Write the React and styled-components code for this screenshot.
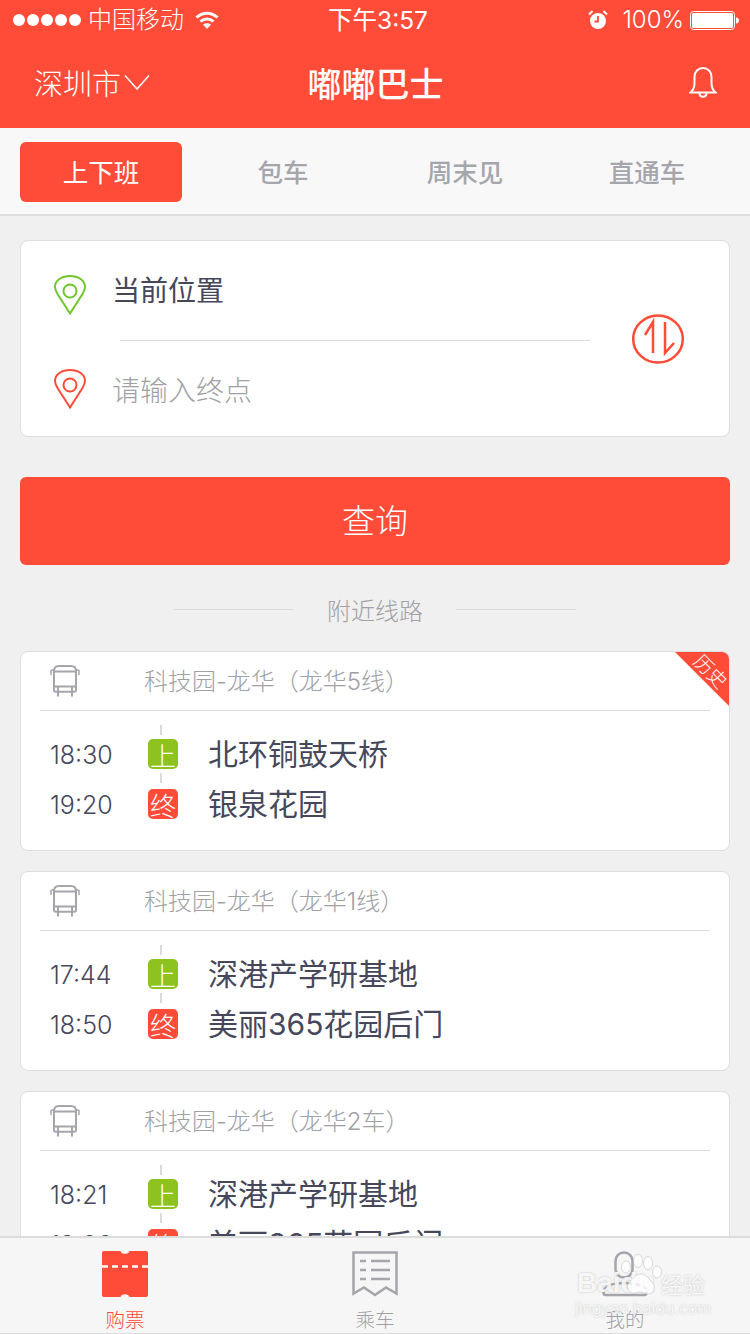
import React from 'react'
import styled, { createGlobalStyle } from 'styled-components'

const RED = '#ff4c39'
const FONT = 'Inter, "Noto Sans CJK SC", sans-serif'

const GlobalStyle = createGlobalStyle`
  html, body {
    margin: 0;
    padding: 0;
    background: #f0f0f0;
    font-family: ${FONT};
  }
  * { box-sizing: border-box; }
`

const Page = styled.div`
  position: relative;
  width: 750px;
  height: 1334px;
  overflow: hidden;
  background: #f0f0f0;
`

const Header = styled.header`
  height: 128px;
  background: ${RED};
  color: #fff;
`

const StatusBar = styled.div`
  display: grid;
  grid-template-columns: 1fr auto 1fr;
  align-items: center;
  height: 40px;
  padding: 0 11px 0 13px;
`

const StatusLeft = styled.div`
  display: flex;
  align-items: center;
`

const StatusRight = styled.div`
  display: flex;
  align-items: center;
  justify-content: flex-end;
`

const Dots = styled.div`
  display: flex;
  gap: 2px;
  margin-right: 7px;
`

const Dot = styled.span`
  width: 12px;
  height: 12px;
  border-radius: 50%;
  background: #fff;
`

const Carrier = styled.span`
  margin-right: 11px;
  font-size: 24px;
  font-weight: 300;
  line-height: 40px;
`

const Clock = styled.span`
  margin-left: 4px;
  font-size: 24.500px;
  line-height: 40px;
`

const Percent = styled.span`
  margin: 0 6px 0 14px;
  font-size: 24px;
  font-weight: 300;
  line-height: 40px;
`

const NavBar = styled.div`
  display: grid;
  grid-template-columns: 1fr auto 1fr;
  align-items: center;
  height: 88px;
  padding: 0 33px 4px 34px;
`

const City = styled.div`
  display: flex;
  align-items: center;
  gap: 3px;
  font-size: 29px;
  font-weight: 300;
`

const NavTitle = styled.h1`
  margin: 0;
  font-size: 34px;
  font-weight: 500;
`

const NavAction = styled.div`
  display: flex;
  justify-content: flex-end;
`

const Tabs = styled.nav`
  display: grid;
  grid-template-columns: repeat(4, 182px);
  height: 88px;
  padding: 14px 0 0 10px;
  background: #f8f8f8;
  border-bottom: 2px solid #dfdfdf;
`

const Tab = styled.div`
  display: flex;
  align-items: center;
  justify-content: center;
  width: 162px;
  height: 60px;
  margin-left: 10px;
  padding-bottom: 3px;
  border-radius: 6px;
  font-size: 25.500px;
  font-weight: ${p => (p.$active ? 400 : 500)};
  color: ${p => (p.$active ? '#fff' : '#a5a6ab')};
  background: ${p => (p.$active ? RED : 'transparent')};
`

const Content = styled.main`
  display: flex;
  flex-direction: column;
  padding: 24px 20px 0;
`

const SearchCard = styled.section`
  display: flex;
  align-items: center;
  height: 197px;
  padding: 0 45px 0 33px;
  background: #fff;
  border: 1px solid #dedede;
  border-radius: 8px;
`

const Places = styled.div`
  flex: 1;
  display: flex;
  flex-direction: column;
`

const PlaceRow = styled.div`
  display: flex;
  align-items: center;
  gap: 26px;
  height: ${p => (p.$first ? 99 : 96)}px;
  padding-top: ${p => (p.$first ? 0 : 1)}px;
`

const PinSlot = styled.span`
  display: flex;
  margin-top: ${p => (p.$first ? 10 : 0)}px;
`

const PlaceText = styled.span`
  font-size: 28px;
  font-weight: ${p => (p.$muted ? 300 : 400)};
  color: ${p => (p.$muted ? '#a0a1a6' : '#46475a')};
  margin-top: ${p => (p.$muted ? 0 : -2)}px;
`

const PlaceDivider = styled.div`
  height: 1px;
  margin: 0 42px 0 66px;
  background: #dcdcdc;
`

const SearchButton = styled.button`
  display: block;
  width: 100%;
  height: 88px;
  margin-top: 40px;
  padding: 0 0 5px;
  border: 0;
  border-radius: 6px;
  background: ${RED};
  color: #fff;
  font-family: ${FONT};
  font-size: 33px;
  font-weight: 300;
`

const SectionTitle = styled.div`
  display: flex;
  align-items: center;
  justify-content: center;
  gap: 33px;
  height: 86px;
  padding-top: 2px;
  font-size: 24px;
  font-weight: 300;
  color: #a0a1a6;
  &::before, &::after {
    content: '';
    width: 120px;
    height: 1px;
    background: #dcdcdc;
  }
`

const RouteList = styled.div`
  display: flex;
  flex-direction: column;
  gap: 20px;
`

const RouteCard = styled.article`
  position: relative;
  height: 200px;
  background: #fff;
  border: 1px solid #dedede;
  border-radius: 8px;
  overflow: hidden;
`

const RouteHead = styled.div`
  display: flex;
  align-items: center;
  height: 59px;
  margin: 0 19px;
  padding-left: 10px;
  border-bottom: 1px solid #dcdcdc;
`

const RouteName = styled.span`
  margin: -4px 0 0 64px;
  font-size: 24px;
  font-weight: 300;
  color: #a0a1a6;
`

const Stops = styled.div`
  padding: 18px 0 0 29px;
`

const StopRow = styled.div`
  display: flex;
  align-items: center;
  height: 50px;
`

const StopTime = styled.span`
  width: 98px;
  margin-top: 1px;
  font-size: 25px;
  font-weight: 300;
  color: #46475a;
`

const StopBadge = styled.span`
  position: relative;
  display: flex;
  align-items: center;
  justify-content: center;
  width: 30px;
  height: 30px;
  border-radius: 5px;
  font-size: 26px;
  font-weight: 300;
  color: #fff;
  background: ${p => (p.$end ? RED : '#8dc21f')};
  ${p => !p.$end && `
    &::before, &::after {
      content: '';
      position: absolute;
      left: 12px;
      width: 2px;
      height: 10px;
      background: #dcdcdc;
    }
    &::before { top: -14px; }
    &::after { bottom: -14px; }
  `}
`

const StopName = styled.span`
  margin: -5px 0 0 30px;
  font-size: 30px;
  font-weight: 400;
  color: #46475a;
`

const Ribbon = styled.div`
  position: absolute;
  top: 0;
  right: 0;
  width: 54px;
  height: 54px;
  background: ${RED};
  clip-path: polygon(0 0, 100% 0, 100% 100%);
`

const RibbonText = styled.span`
  position: absolute;
  top: 10px;
  right: 0;
  font-size: 19px;
  font-weight: 300;
  line-height: 20px;
  color: #fff;
  transform: rotate(45deg);
`

const TabBar = styled.footer`
  position: absolute;
  left: 0;
  right: 0;
  bottom: 0;
  display: grid;
  grid-template-columns: repeat(3, 250px);
  height: 98px;
  background: #f6f6f6;
  border-top: 2px solid #dcdcdc;
  border-bottom: 1px solid #dcdcdc;
`

const TabItem = styled.div`
  display: flex;
  flex-direction: column;
  align-items: center;
  padding-top: 13px;
  color: ${p => (p.$active ? RED : '#a0a1a6')};
`

const TabLabel = styled.span`
  margin-top: 11px;
  font-size: 19.500px;
  font-weight: 300;
  line-height: 24px;
`

const Watermark = styled.div`
  position: absolute;
  left: 577px;
  bottom: 14px;
  color: rgba(255, 255, 255, 0.85);
  text-shadow: 0 0 2px rgba(150, 150, 150, 0.6);
  pointer-events: none;
`

const WatermarkMain = styled.div`
  display: flex;
  align-items: center;
  gap: 6px;
  font-family: "Liberation Sans", sans-serif;
  font-size: 28px;
  font-weight: 700;
  line-height: 26px;
  white-space: nowrap;
`

const WatermarkWord = styled.span`
  font-family: "Noto Sans CJK SC", sans-serif;
  font-size: 22px;
  font-weight: 400;
`

const WatermarkSub = styled.div`
  margin-left: -2px;
  font-size: 16px;
  font-weight: 300;
  line-height: 24px;
`

const WatermarkPaw = styled.svg`
  position: absolute;
  left: 41px;
  top: -20px;
`

const Wifi = () => (
  <svg width="24" height="18" viewBox="0 0 24 18" fill="none" stroke="#fff" strokeWidth="3">
    <path d="M1.500 6.500C7.500 .8 16.500 .8 22.500 6.500" />
    <path d="M5.500 10.500c3.800-3.400 9.200-3.400 13 0" />
    <path d="M12 18l-4-4.500c2.400-1.700 5.600-1.700 8 0z" fill="#fff" stroke="none" />
  </svg>
)

const Alarm = () => (
  <svg width="20" height="20" viewBox="0 0 20 20">
    <circle cx="10" cy="11" r="8" fill="#fff" />
    <path d="M10 6v5.500H6.500" fill="none" stroke={RED} strokeWidth="1.800" />
    <path d="M1 4.500L4.500 1M19 4.500L15.500 1" stroke="#fff" strokeWidth="2" />
  </svg>
)

const Battery = () => (
  <svg width="49" height="19" viewBox="0 0 49 19">
    <rect x=".5" y=".5" width="44" height="18" rx="3" fill="none" stroke="#fff" />
    <rect x="2" y="2" width="41" height="15" rx="1.500" fill="#fff" />
    <path d="M46 6.500c1.800 0 3 1 3 3s-1.200 3-3 3z" fill="#fff" />
  </svg>
)

const Chevron = () => (
  <svg width="26" height="16" viewBox="0 0 26 16" fill="none" stroke="#fff" strokeWidth="1.500">
    <path d="M1 1.500L13 15 25 1.500" />
  </svg>
)

const Bell = () => (
  <svg width="28" height="31" viewBox="0 0 28 31" fill="none" stroke="#fff" strokeWidth="2">
    <path d="M1.500 25.500c2.800-2.500 4-5 4-9V10c0-5.200 3.700-9 8.500-9s8.500 3.800 8.500 9v6.500c0 4 1.200 6.500 4 9z" />
    <path d="M10.500 26c0 5 7 5 7 0" />
  </svg>
)

const Pin = ({ color }) => (
  <svg width="32" height="40" viewBox="0 0 32 40" fill="none" stroke={color} strokeWidth="2">
    <path d="M16 38.500L3.500 19C2 16.600 1 14.500 1 11.800 1 5.500 7.800 1 16 1s15 4.500 15 10.800c0 2.700-1 4.800-2.500 7.200z" />
    <circle cx="16" cy="16" r="6.500" />
  </svg>
)

const Swap = () => (
  <svg width="52" height="50" viewBox="0 0 52 50" fill="none" stroke={RED} strokeWidth="2.500">
    <ellipse cx="26" cy="25" rx="24.800" ry="23.500" />
    <path d="M21 39V8l-8 13" />
    <path d="M33 8v31l9-10" />
  </svg>
)

const Bus = () => (
  <svg width="30" height="32" viewBox="0 0 30 32" fill="none" stroke="#a5a6ab" strokeWidth="2">
    <path d="M4 6C4 3 6 1 9 1h12c3 0 5 2 5 5v19c0 1-.8 1.800-1.800 1.800H5.800C4.800 26.800 4 26 4 25z" />
    <path d="M4 6.500h22M4 21.500h22" />
    <path d="M8 21.500v10M22 21.500v10" />
    <path d="M1 10V5.500l3-1M29 10V5.500l-3-1" strokeWidth="1.500" />
  </svg>
)

const Ticket = () => (
  <svg width="46" height="46" viewBox="0 0 46 46">
    <path
      fill={RED}
      d="M2 0h16.500c.8 3.800 8.200 3.800 9 0H44c1.200 0 2 .8 2 2v42c0 1.200-.8 2-2 2H27.500c-.8-3.800-8.200-3.800-9 0H2c-1.200 0-2-.8-2-2V2C0 .8.800 0 2 0z"
    />
    <path d="M0 15.500h46" stroke="#fff" strokeWidth="2.500" strokeDasharray="6 4" />
  </svg>
)

const Receipt = () => (
  <svg width="46" height="46" viewBox="0 0 46 46" fill="none" stroke="#a5a6ab" strokeWidth="2.500">
    <path d="M1.500 1.500h43v41l-10.500-6-11 7.500-11-7.500-10.500 6z" />
    <path d="M8 10h6M19 10h19M8 19h6M19 19h19M8 28h6M19 28h19" />
  </svg>
)

const Person = () => (
  <svg width="46" height="46" viewBox="0 0 46 46" fill="none" stroke="#a5a6ab" strokeWidth="2.500">
    <rect x="13.500" y="1.500" width="17" height="25" rx="8.500" />
    <path d="M1.500 41c1-6 9-9 21-9s21 3 22 9c0 2-1 3-2 3H3.500c-1 0-2-1-2-3z" />
  </svg>
)

const Paw = () => (
  <WatermarkPaw width="48" height="48" viewBox="0 0 48 48" fill="rgba(255,255,255,0.75)" stroke="rgba(170,170,170,0.4)">
    <ellipse cx="8" cy="17" rx="4.500" ry="6" />
    <ellipse cx="20" cy="11" rx="4.500" ry="6.500" />
    <ellipse cx="30" cy="13" rx="4.500" ry="6.500" />
    <ellipse cx="39" cy="22" rx="4.500" ry="6" />
    <path d="M23 24c5 0 7 4 11 8 4 4 3 12-4 12-4 0-5-2-8-2s-5 2-8 1c-6-2-5-9-2-12 4-2 5-7 11-7z" />
  </WatermarkPaw>
)

const routes = [
  { name: '科技园-龙华（龙华5线）', from: '18:30', fromName: '北环铜鼓天桥', to: '19:20', toName: '银泉花园', history: true },
  { name: '科技园-龙华（龙华1线）', from: '17:44', fromName: '深港产学研基地', to: '18:50', toName: '美丽365花园后门' },
  { name: '科技园-龙华（龙华2车）', from: '18:21', fromName: '深港产学研基地', to: '19:26', toName: '美丽365花园后门' }
]

const tabs = ['上下班', '包车', '周末见', '直通车']

const App = () => (
  <Page>
    <GlobalStyle />
    <Header>
      <StatusBar>
        <StatusLeft>
          <Dots>{[0, 1, 2, 3, 4].map(i => <Dot key={i} />)}</Dots>
          <Carrier>中国移动</Carrier>
          <Wifi />
        </StatusLeft>
        <Clock>下午3:57</Clock>
        <StatusRight>
          <Alarm />
          <Percent>100%</Percent>
          <Battery />
        </StatusRight>
      </StatusBar>
      <NavBar>
        <City>深圳市<Chevron /></City>
        <NavTitle>嘟嘟巴士</NavTitle>
        <NavAction><Bell /></NavAction>
      </NavBar>
    </Header>

    <Tabs>
      {tabs.map((tab, i) => <Tab key={tab} $active={i === 0}>{tab}</Tab>)}
    </Tabs>

    <Content>
      <SearchCard>
        <Places>
          <PlaceRow $first>
            <PinSlot $first><Pin color="#6fc72b" /></PinSlot>
            <PlaceText>当前位置</PlaceText>
          </PlaceRow>
          <PlaceDivider />
          <PlaceRow>
            <PinSlot><Pin color={RED} /></PinSlot>
            <PlaceText $muted>请输入终点</PlaceText>
          </PlaceRow>
        </Places>
        <Swap />
      </SearchCard>

      <SearchButton>查询</SearchButton>
      <SectionTitle>附近线路</SectionTitle>

      <RouteList>
        {routes.map(route => (
          <RouteCard key={route.name}>
            <RouteHead>
              <Bus />
              <RouteName>{route.name}</RouteName>
            </RouteHead>
            {route.history && <Ribbon><RibbonText>历史</RibbonText></Ribbon>}
            <Stops>
              <StopRow>
                <StopTime>{route.from}</StopTime>
                <StopBadge>上</StopBadge>
                <StopName>{route.fromName}</StopName>
              </StopRow>
              <StopRow>
                <StopTime>{route.to}</StopTime>
                <StopBadge $end>终</StopBadge>
                <StopName>{route.toName}</StopName>
              </StopRow>
            </Stops>
          </RouteCard>
        ))}
      </RouteList>
    </Content>

    <TabBar>
      <TabItem $active><Ticket /><TabLabel>购票</TabLabel></TabItem>
      <TabItem><Receipt /><TabLabel>乘车</TabLabel></TabItem>
      <TabItem><Person /><TabLabel>我的</TabLabel></TabItem>
    </TabBar>

    <Watermark>
      <Paw />
      <WatermarkMain>Baidu<WatermarkWord>经验</WatermarkWord></WatermarkMain>
      <WatermarkSub>jingyan.baidu.com</WatermarkSub>
    </Watermark>
  </Page>
)

export default App
